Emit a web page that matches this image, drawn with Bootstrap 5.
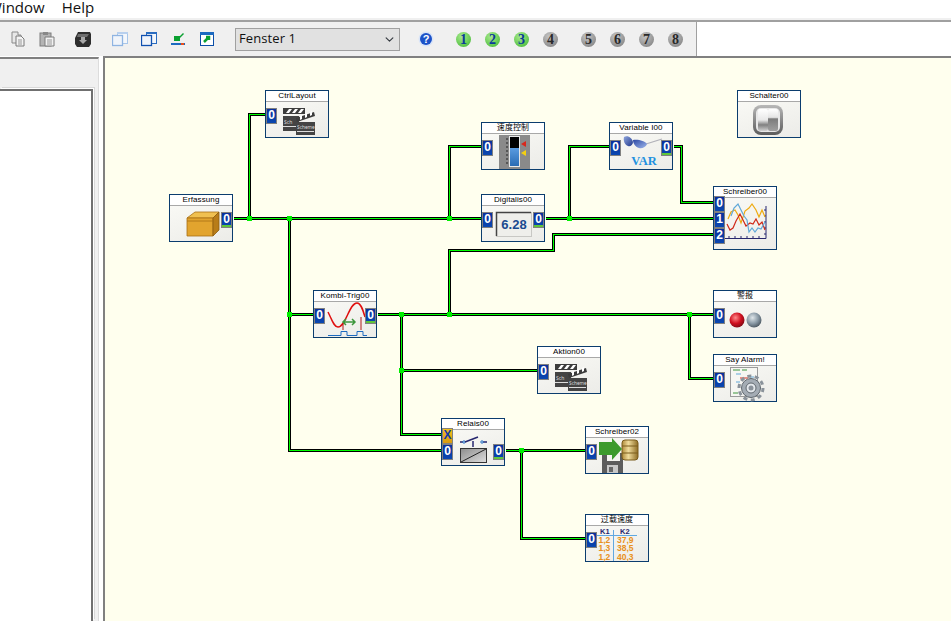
<!DOCTYPE html>
<html lang="en">
<head>
    <meta charset="UTF-8">
    <meta name="viewport" content="width=device-width, initial-scale=1.0">
    <title>Fenster 1</title>
    <link href="https://cdn.jsdelivr.net/npm/bootstrap@5.3.0/dist/css/bootstrap.min.css" rel="stylesheet">
    <style>
        html, body { height: 621px; overflow: hidden; background: #fff; }

        /* menu */
        .menu-row { height: 18px; font: 15px/14px "Open Sans", "Liberation Sans", sans-serif; color: #111; margin-left: -12px; gap: 17px; }
        .menu-gap { height: 2px; background: #f0f0f0; }

        /* toolbar */
        .tool-row { height: 36px; border-top: 2px solid #a0a0a0; }
        .tool-bar { width: 697px; height: 34px; background: #f0f0f0; border-right: 1px solid #a0a0a0; }
        .tool-group { display: flex; gap: 13px; }
        .ball-group { display: flex; gap: 14px; }
        .tool-ico { width: 16px; height: 16px; display: block; flex: none; }
        .mg-10 { margin-left: 10px; } .mg-18 { margin-left: 18px; }
        .mg-20 { margin-left: 20px; } .mg-21 { margin-left: 21px; } .mg-22 { margin-left: 22px; } .mg-23 { margin-left: 23px; }
        .win-select.form-select { width: 165px; height: 23px; flex: none; padding: 0 0 3px 3px; border: 1px solid #a0a0a0; border-radius: 0; background-color: #e1e1e1; background-size: 11px 9px; background-position: right 4px center; font: 13px/18px "Open Sans", "Liberation Sans", sans-serif; letter-spacing: .1px; color: #111; }
        .num-ball { width: 15px; height: 15px; flex: none; border-radius: 50%; text-align: center; font: bold 14px/15px "Liberation Serif", serif; }
        .ball-on { background: radial-gradient(circle at 40% 30%, #a8ea8c, #52c042 80%); color: #0a3a9a; }
        .ball-off { background: radial-gradient(circle at 40% 30%, #c4c4c4, #858585 85%); color: #2a2a2a; }

        /* left panel + canvas */
        .main-row { height: 565px; }
        .side-panel { width: 99px; flex: none; margin-top: 1px; padding-top: 30px; background: #f0f0f0; border-top: 2px solid #808080; border-right: 1px solid #dcdcdc; margin-right: 4px; }
        .side-tree { width: 93px; height: 100%; background: #fff; border-top: 2px solid #707070; border-right: 2px solid #707070; box-shadow: 1px -1px 0 #fff, 2px -2px 0 #d8d8d8; }
        .flow-canvas { flex: 1 1 auto; position: relative; background: #ffffee; border-top: 2px solid #808080; border-left: 2px solid #808080; overflow: hidden; }
        .wire-layer { position: absolute; left: -105px; top: -58px; width: 951px; height: 621px; }
        .wire-dark { fill: none; stroke: #000; stroke-width: 3; }
        .wire-lit { fill: none; stroke: #00ff00; stroke-width: 1; }

        /* function blocks */
        .blk { position: absolute; width: 64px; height: 48px; border: 1px solid #0b3d6e; background: linear-gradient(160deg, #fbfbf7, #ecece8); }
        .blk-tall { height: 64px; }
        .blk-title { height: 10px; background: #fff; border-bottom: 1px solid #a8a8a8; text-align: center; font: 8px/9px "Liberation Sans", "Noto Sans CJK SC", sans-serif; letter-spacing: .1px; color: #000; white-space: nowrap; box-sizing: content-box; }
        .blk-art { position: absolute; left: -1px; top: -1px; width: 64px; height: 64px; overflow: visible; }
        .blk-art text { font-family: "Liberation Sans", sans-serif; }
        .blk-art text.art-serif { font-family: "Liberation Serif", serif; }
        .port { position: absolute; width: 11px; height: 16px; border: 1px solid #808080; background: linear-gradient(#0a2f9c, #0a47b0); color: #fff; text-align: center; font: bold 12px/13px "Liberation Sans", sans-serif; }
        .port-in { left: 0; }
        .port-out { left: 51px; }
        .port-out::after { content: ""; position: absolute; left: 0; right: 0; bottom: 0; height: 2px; background: #5fc63a; }
        .port-xor { background: linear-gradient(#f2c21a, #d99a10); color: #1238a8; }
        .at-10 { top: 9px; } .at-18 { top: 17px; } .at-26 { top: 25px; } .at-42 { top: 41px; }

        #n-erf { left: 64px; top: 136px; } #n-ctrl { left: 160px; top: 32px; }
        #n-speed { left: 376px; top: 64px; } #n-digi { left: 376px; top: 136px; }
        #n-var { left: 504px; top: 64px; } #n-schr { left: 608px; top: 128px; }
        #n-schalt { left: 632px; top: 32px; } #n-kombi { left: 208px; top: 232px; }
        #n-warn { left: 608px; top: 232px; } #n-say { left: 608px; top: 296px; }
        #n-akt { left: 432px; top: 288px; } #n-rel { left: 336px; top: 360px; }
        #n-schr2 { left: 480px; top: 368px; } #n-table { left: 480px; top: 456px; }
    </style>
</head>
<body>

    <svg width="0" height="0" class="position-absolute">
        <defs>
            <g id="clapper">
                <rect x="18" y="18" width="22" height="6" fill="#3c3c3c"/>
                <path d="M21 23l3-4h3l-3 4zM27 23l3-4h3l-3 4zM33 23l3-4h3l-3 4z" fill="#fff"/>
                <rect x="18" y="26" width="16" height="15" fill="#444"/>
                <text x="19" y="34" font-size="5" fill="#ddd">Sch</text>
                <rect x="18" y="36" width="14" height="1" fill="#ddd"/>
                <path d="M31 28l18-6 1 4-18 6z" fill="#3c3c3c"/>
                <path d="M35 30l0-4 2-1 0 4zM40 28l0-4 2-1 0 4zM45 26l0-4 2-1 0 4z" fill="#fff"/>
                <rect x="31" y="32" width="19" height="13" fill="#444"/>
                <text x="32" y="39" font-size="4.800" fill="#ddd">Scheme</text>
                <rect x="32" y="41" width="17" height="1" fill="#ddd"/>
            </g>
            <linearGradient id="gaugeBlue" x1="0" y1="0" x2="0" y2="1"><stop offset="0" stop-color="#5a9be0"/><stop offset="1" stop-color="#2a6cb4"/></linearGradient>
            <radialGradient id="ballRed" cx=".4" cy=".35" r=".7"><stop offset="0" stop-color="#ff8a8a"/><stop offset=".55" stop-color="#d01020"/><stop offset="1" stop-color="#7a0a14"/></radialGradient>
            <radialGradient id="ballGray" cx=".4" cy=".35" r=".7"><stop offset="0" stop-color="#dfe6ea"/><stop offset=".55" stop-color="#8a9aa6"/><stop offset="1" stop-color="#46525c"/></radialGradient>
            <linearGradient id="dbGold" x1="0" y1="0" x2="1" y2="0"><stop offset="0" stop-color="#b08a3a"/><stop offset=".4" stop-color="#f0dc9c"/><stop offset="1" stop-color="#8e6c24"/></linearGradient>
            <linearGradient id="swRing" x1="0" y1="0" x2="0" y2="1"><stop offset="0" stop-color="#b8b8b8"/><stop offset="1" stop-color="#5c5c5c"/></linearGradient>
            <linearGradient id="swLeft" x1="0" y1="0" x2="0" y2="1"><stop offset="0" stop-color="#ffffff"/><stop offset=".5" stop-color="#e8e8e8"/><stop offset=".72" stop-color="#808080"/><stop offset="1" stop-color="#d0d0d0"/></linearGradient>
            <linearGradient id="swRight" x1="0" y1="0" x2="0" y2="1"><stop offset="0" stop-color="#ffffff"/><stop offset=".38" stop-color="#e4e4e4"/><stop offset=".45" stop-color="#7c7c7c"/><stop offset="1" stop-color="#a0a0a0"/></linearGradient>
            <linearGradient id="relGray" x1="0" y1="0" x2="1" y2="1"><stop offset="0" stop-color="#8c8c8c"/><stop offset="1" stop-color="#dedede"/></linearGradient>
            <linearGradient id="lensDark" x1="0" y1="0" x2="1" y2="1"><stop offset="0" stop-color="#8ea4dc"/><stop offset="1" stop-color="#20388c"/></linearGradient>
            <linearGradient id="lensLight" x1="0" y1="0" x2="1" y2="1"><stop offset="0" stop-color="#2c48a4"/><stop offset="1" stop-color="#a0b8ec"/></linearGradient>
        </defs>
    </svg>

    <!-- Menu -->
    <div class="menu-row d-flex overflow-hidden">
        <span>Window</span>
        <span>Help</span>
    </div>
    <div class="menu-gap"></div>

    <!-- Toolbar -->
    <div class="tool-row">
        <div class="tool-bar d-flex align-items-center">
            <div class="tool-group mg-10">
                <svg class="tool-ico" viewBox="0 0 16 16"><path d="M2 1h6v3h3v8H2z" fill="#e8e8e8" stroke="#8a8a8a"/><path d="M6 5h5l3 3v7H6z" fill="#f4f4f4" stroke="#7a7a7a"/><path d="M8 9h4M8 11h4M8 13h4" stroke="#999"/></svg>
                <svg class="tool-ico" viewBox="0 0 16 16"><rect x="1" y="2" width="11" height="13" fill="#b4b4b4" stroke="#7c7c7c"/><rect x="4" y="1" width="5" height="3" fill="#888"/><path d="M6 6h9v9H6z" fill="#f2f2f2" stroke="#7c7c7c"/><path d="M8 9h5M8 11h5M8 13h5" stroke="#999"/></svg>
            </div>
            <svg class="tool-ico mg-20" viewBox="0 0 16 16"><path d="M0 7l3-6h12l1 2v10l-2 3H2l-2-3z" fill="#2e2e2e"/><path d="M3 3h11l-2 3H2z" fill="#6e6e6e"/><path d="M6 6h4v3h2l-4 4-4-4h2z" fill="#a8a8a8"/></svg>
            <div class="tool-group mg-21">
                <svg class="tool-ico" viewBox="0 0 16 16"><rect x="5.500" y="1.500" width="10" height="11" fill="#f4f7fb" stroke="#a8c6ea"/><rect x="5" y="1" width="11" height="2" fill="#b8d0ee"/><rect x=".5" y="4.500" width="10" height="10" fill="#f0f4fa" stroke="#8fb4e2" stroke-width="1.300"/></svg>
                <svg class="tool-ico" viewBox="0 0 16 16"><rect x="5.500" y="1.500" width="10" height="11" fill="#f4f7fb" stroke="#2a6cc0"/><rect x="5" y="1" width="11" height="2" fill="#2a6cc0"/><rect x=".5" y="4.500" width="10" height="10" fill="#f0f4fa" stroke="#1050b0" stroke-width="1.300"/></svg>
                <svg class="tool-ico" viewBox="0 0 16 16"><rect x="1" y="12" width="14" height="2" fill="#1c6ac0"/><rect x="11" y="12" width="3" height="2" fill="#e8501c"/><rect x="4" y="5" width="6" height="5" fill="#0aa030"/><path d="M7 8l6-6 1 1-6 6z" fill="#0aa030"/></svg>
                <svg class="tool-ico" viewBox="0 0 16 16"><rect x="1.500" y="1.500" width="13" height="13" fill="#fff" stroke="#0c4ea8"/><rect x="1" y="1" width="14" height="3" fill="#1c6ac0"/><path d="M5 11l5-5M7 6h3v3" stroke="#0aa030" stroke-width="2.500" fill="none"/></svg>
            </div>
            <select class="form-select win-select mg-20" aria-label="Fenster">
                <option>Fenster 1</option>
            </select>
            <svg class="tool-ico mg-18" viewBox="0 0 16 16"><circle cx="8" cy="8" r="7.500" fill="#d8e4f8"/><circle cx="8" cy="8" r="6" fill="#1c52c8"/><text x="8" y="12" font-family="Liberation Sans" font-weight="bold" font-size="11" fill="#fff" text-anchor="middle">?</text></svg>
            <div class="ball-group mg-22">
                <span class="num-ball ball-on">1</span>
                <span class="num-ball ball-on">2</span>
                <span class="num-ball ball-on">3</span>
                <span class="num-ball ball-off">4</span>
            </div>
            <div class="ball-group mg-23">
                <span class="num-ball ball-off">5</span>
                <span class="num-ball ball-off">6</span>
                <span class="num-ball ball-off">7</span>
                <span class="num-ball ball-off">8</span>
            </div>
        </div>
    </div>

    <div class="main-row d-flex">
        <!-- Left panel -->
        <aside class="side-panel">
            <div class="side-tree"></div>
        </aside>

        <!-- Schematic -->
        <main class="flow-canvas">
            <svg class="wire-layer" viewBox="0 0 951 621" shape-rendering="crispEdges">
                <defs>
                    <path id="wires" transform="translate(.5 .5)" d="M233 218H481M545 218H713M265 114H249V218M481 146H449V218M609 146H569V218M673 146H681V202H713M713 234H553V250H449V314M289 218V450H441M289 314H313M377 314H713M401 314V434H441M401 370H537M689 314V378H713M505 450H585M521 450V538H585"/>
                </defs>
                <use href="#wires" class="wire-dark"/>
                <use href="#wires" class="wire-lit"/>
                <g fill="#00ee00">
                    <rect x="247" y="216" width="5" height="5"/>
                    <rect x="287" y="216" width="5" height="5"/>
                    <rect x="447" y="216" width="5" height="5"/>
                    <rect x="567" y="216" width="5" height="5"/>
                    <rect x="287" y="312" width="5" height="5"/>
                    <rect x="399" y="312" width="5" height="5"/>
                    <rect x="447" y="312" width="5" height="5"/>
                    <rect x="687" y="312" width="5" height="5"/>
                    <rect x="399" y="368" width="5" height="5"/>
                    <rect x="519" y="448" width="5" height="5"/>
                </g>
            </svg>

            <div class="blk" id="n-erf">
                <div class="blk-title">Erfassung</div>
                <svg class="blk-art" viewBox="0 0 64 64">
                    <path d="M18 24l8-6h24l-6 6z" fill="#f0c050" stroke="#a87014" stroke-width=".8"/>
                    <path d="M18 24h26v18H18z" fill="#e2a42e" stroke="#a87014" stroke-width=".8"/>
                    <path d="M44 24l6-6v18l-6 6z" fill="#b87c18" stroke="#8c5c10" stroke-width=".8"/>
                    <path d="M18 27h26" stroke="#a87014" stroke-width=".8"/>
                </svg>
                <span class="port port-out at-18">0</span>
            </div>

            <div class="blk" id="n-ctrl">
                <div class="blk-title">CtrlLayout</div>
                <svg class="blk-art" viewBox="0 0 64 64"><use href="#clapper"/></svg>
                <span class="port port-in at-18">0</span>
            </div>

            <div class="blk" id="n-speed">
                <div class="blk-title">速度控制</div>
                <svg class="blk-art" viewBox="0 0 64 64">
                    <rect x="18" y="13" width="31" height="34" fill="#8a8a8a"/>
                    <rect x="28" y="14" width="11" height="31" fill="#e8e8e8"/>
                    <rect x="29" y="15" width="9" height="11" fill="#000"/>
                    <rect x="29" y="26" width="9" height="18" fill="url(#gaugeBlue)"/>
                    <path d="M25 17h2M25 21h2M25 25h2M25 29h2M25 33h2M25 37h2M25 41h2" stroke="#222"/>
                    <path d="M40 22l5-3v6z" fill="#d8281c"/>
                    <path d="M40 31l5-3v6z" fill="#f4d010"/>
                </svg>
                <span class="port port-in at-18">0</span>
            </div>

            <div class="blk" id="n-digi">
                <div class="blk-title">Digitalis00</div>
                <svg class="blk-art" viewBox="0 0 64 64">
                    <rect x="15.500" y="18.500" width="35" height="24" fill="#efefeb" stroke="#c8c8c4"/>
                    <path d="M15.500 42V18.500H50" fill="none" stroke="#444" stroke-width="1.500"/>
                    <text x="33" y="35" font-size="13" font-weight="bold" fill="#1a4a90" text-anchor="middle">6.28</text>
                </svg>
                <span class="port port-in at-18">0</span>
                <span class="port port-out at-18">0</span>
            </div>

            <div class="blk" id="n-var">
                <div class="blk-title">Variable I00</div>
                <svg class="blk-art" viewBox="0 0 64 64">
                    <path d="M37 22l16-5" stroke="#b0b0b8" stroke-width="1.200" fill="none"/>
                    <path d="M15 15c4-2 8 1 9 5 0 3-3 5-5 4-3-1-5-5-4-9z" fill="url(#lensDark)"/>
                    <path d="M24 18c5-1 12 1 14 4-1 3-5 5-8 4-4-1-6-5-6-8z" fill="url(#lensLight)"/>
                    <text class="art-serif" x="35" y="43" font-size="12.500" font-weight="bold" fill="#2090e0" text-anchor="middle">VAR</text>
                </svg>
                <span class="port port-in at-18">0</span>
                <span class="port port-out at-18">0</span>
            </div>

            <div class="blk blk-tall" id="n-schr">
                <div class="blk-title">Schreiber00</div>
                <svg class="blk-art" viewBox="0 0 64 64">
                    <path d="M12 52.500H53V20" fill="none" stroke="#26266e"/>
                    <path d="M53 24h-2M53 30h-2M53 36h-2M53 42h-2M53 48h-2M16 52v-2M22 52v-2M28 52v-2M34 52v-2M40 52v-2M46 52v-2" stroke="#26266e"/>
                    <polyline points="15,33 18,26 22,24 25,29 28,37 32,25 36,22 39,18 43,24 46,31 49,24 52,31" fill="none" stroke="#eeaa10" stroke-width="1.200"/>
                    <polyline points="14,38 17,44 20,42 23,35 27,28 30,34 33,40 37,37 40,38 43,33 46,39 49,36 52,44" fill="none" stroke="#d02818" stroke-width="1.200"/>
                    <polyline points="18,30 21,22 25,18 28,24 31,30 34,34 36,46 39,42 42,46 45,42 48,43 52,36" fill="none" stroke="#60a8d8" stroke-width="1.200"/>
                </svg>
                <span class="port port-in at-10">0</span>
                <span class="port port-in at-26">1</span>
                <span class="port port-in at-42">2</span>
            </div>

            <div class="blk" id="n-schalt">
                <div class="blk-title">Schalter00</div>
                <svg class="blk-art" viewBox="0 0 64 64">
                    <rect x="16" y="15" width="30" height="30" rx="8" fill="url(#swRing)"/>
                    <rect x="19" y="18" width="24" height="24" rx="5" fill="#e8e8e8"/>
                    <rect x="21" y="19" width="10" height="22" rx="2" fill="url(#swLeft)"/>
                    <rect x="31" y="19" width="10" height="22" rx="2" fill="url(#swRight)"/>
                </svg>
            </div>

            <div class="blk" id="n-kombi">
                <div class="blk-title">Kombi-Trig00</div>
                <svg class="blk-art" viewBox="0 0 64 64">
                    <path d="M15 22C19 30 21 37 25 37C33 37 36 13 44 13C48 13 50 20 52 27" fill="none" stroke="#e01010" stroke-width="1.500"/>
                    <path d="M30 32h12M33 29l-3 3 3 3M39 29l3 3-3 3" fill="none" stroke="#3c963c" stroke-width="1.500"/>
                    <path d="M30 34v6M48 27v13" stroke="#b01818"/>
                    <path d="M15 45.500H28V41.500H34V45.500H44V41.500H50V45.500H54" fill="none" stroke="#1c6ac0"/>
                </svg>
                <span class="port port-in at-18">0</span>
                <span class="port port-out at-18">0</span>
            </div>

            <div class="blk" id="n-warn">
                <div class="blk-title">警报</div>
                <svg class="blk-art" viewBox="0 0 64 64">
                    <circle cx="24" cy="30" r="7.500" fill="url(#ballRed)"/>
                    <circle cx="41" cy="30" r="7.500" fill="url(#ballGray)"/>
                </svg>
                <span class="port port-in at-18">0</span>
            </div>

            <div class="blk" id="n-say">
                <div class="blk-title">Say Alarm!</div>
                <svg class="blk-art" viewBox="0 0 64 64">
                    <rect x="17.500" y="13.500" width="27" height="29" fill="#f6f6f2" stroke="#9a9a9a"/>
                    <path d="M20 16h7M29 16h5" stroke="#3c963c"/>
                    <path d="M23 20h5" stroke="#60a8d8"/>
                    <path d="M27 24h8" stroke="#d83020"/>
                    <path d="M37 23h4M23 28h4" stroke="#60a8d8"/>
                    <path d="M20 39h5" stroke="#3c963c"/>
                    <circle cx="38" cy="34" r="9.500" fill="#a4acb4" stroke="#60686f"/>
                    <circle cx="38" cy="34" r="12" fill="none" stroke="#8a929a" stroke-width="3" stroke-dasharray="4 3.500"/>
                    <circle cx="38" cy="34" r="5" fill="#e4e8ec" stroke="#60686f"/>
                    <circle cx="38" cy="34" r="2.500" fill="#8a929a"/>
                </svg>
                <span class="port port-in at-18">0</span>
            </div>

            <div class="blk" id="n-akt">
                <div class="blk-title">Aktion00</div>
                <svg class="blk-art" viewBox="0 0 64 64"><use href="#clapper"/></svg>
                <span class="port port-in at-18">0</span>
            </div>

            <div class="blk" id="n-rel">
                <div class="blk-title">Relais00</div>
                <svg class="blk-art" viewBox="0 0 64 64">
                    <path d="M19 24h4M42 24h4" stroke="#26266e" stroke-width="1.500"/>
                    <circle cx="23" cy="24" r="1.200" fill="#fff" stroke="#1c6ac0"/>
                    <circle cx="41" cy="24" r="1.200" fill="#fff" stroke="#1c6ac0"/>
                    <path d="M24 24l13-5" stroke="#26266e" stroke-width="1.500"/>
                    <path d="M32 23v6" stroke="#26266e" stroke-width="1.500"/>
                    <rect x="19.500" y="30.500" width="26" height="14" fill="url(#relGray)" stroke="#333"/>
                    <path d="M20 44l25-13" stroke="#222"/>
                </svg>
                <span class="port port-xor port-in at-10">X</span>
                <span class="port port-in at-26">0</span>
                <span class="port port-out at-26">0</span>
            </div>

            <div class="blk" id="n-schr2">
                <div class="blk-title">Schreiber02</div>
                <svg class="blk-art" viewBox="0 0 64 64">
                    <path d="M17 27h21v20H17z" fill="#5c5c5c"/>
                    <rect x="22" y="26" width="13" height="9" fill="#f4f4f0"/>
                    <rect x="22" y="39" width="11" height="8" fill="#c8c8c8"/>
                    <rect x="24" y="41" width="4" height="5" fill="#666"/>
                    <rect x="37" y="14" width="16" height="20" rx="3" fill="url(#dbGold)" stroke="#7a5c1c"/>
                    <path d="M37 20h16M37 27h16" stroke="#7a5c1c"/>
                    <path d="M14 16h13v-4l10 11-10 11v-5H14z" fill="#3c9a2c"/>
                </svg>
                <span class="port port-in at-18">0</span>
            </div>

            <div class="blk" id="n-table">
                <div class="blk-title">过载速度</div>
                <svg class="blk-art" viewBox="0 0 64 64">
                    <path d="M12 21.500H52M28.500 16V47" stroke="#60a8e0"/>
                    <g font-size="7.500" font-weight="bold" fill="#26266e"><text x="15" y="20">K1</text><text x="35" y="20">K2</text></g>
                    <g font-size="8.500" font-weight="bold" fill="#e89020">
                        <text x="13.500" y="29">1,2</text><text x="32" y="29">37,9</text>
                        <text x="13.500" y="37">1,3</text><text x="32" y="37">38,5</text>
                        <text x="13.500" y="45.500">1,2</text><text x="32" y="45.500">40,3</text>
                    </g>
                </svg>
                <span class="port port-in at-18">0</span>
            </div>
        </main>
    </div>

    <script src="https://cdn.jsdelivr.net/npm/bootstrap@5.3.0/dist/js/bootstrap.bundle.min.js"></script>
</body>
</html>
